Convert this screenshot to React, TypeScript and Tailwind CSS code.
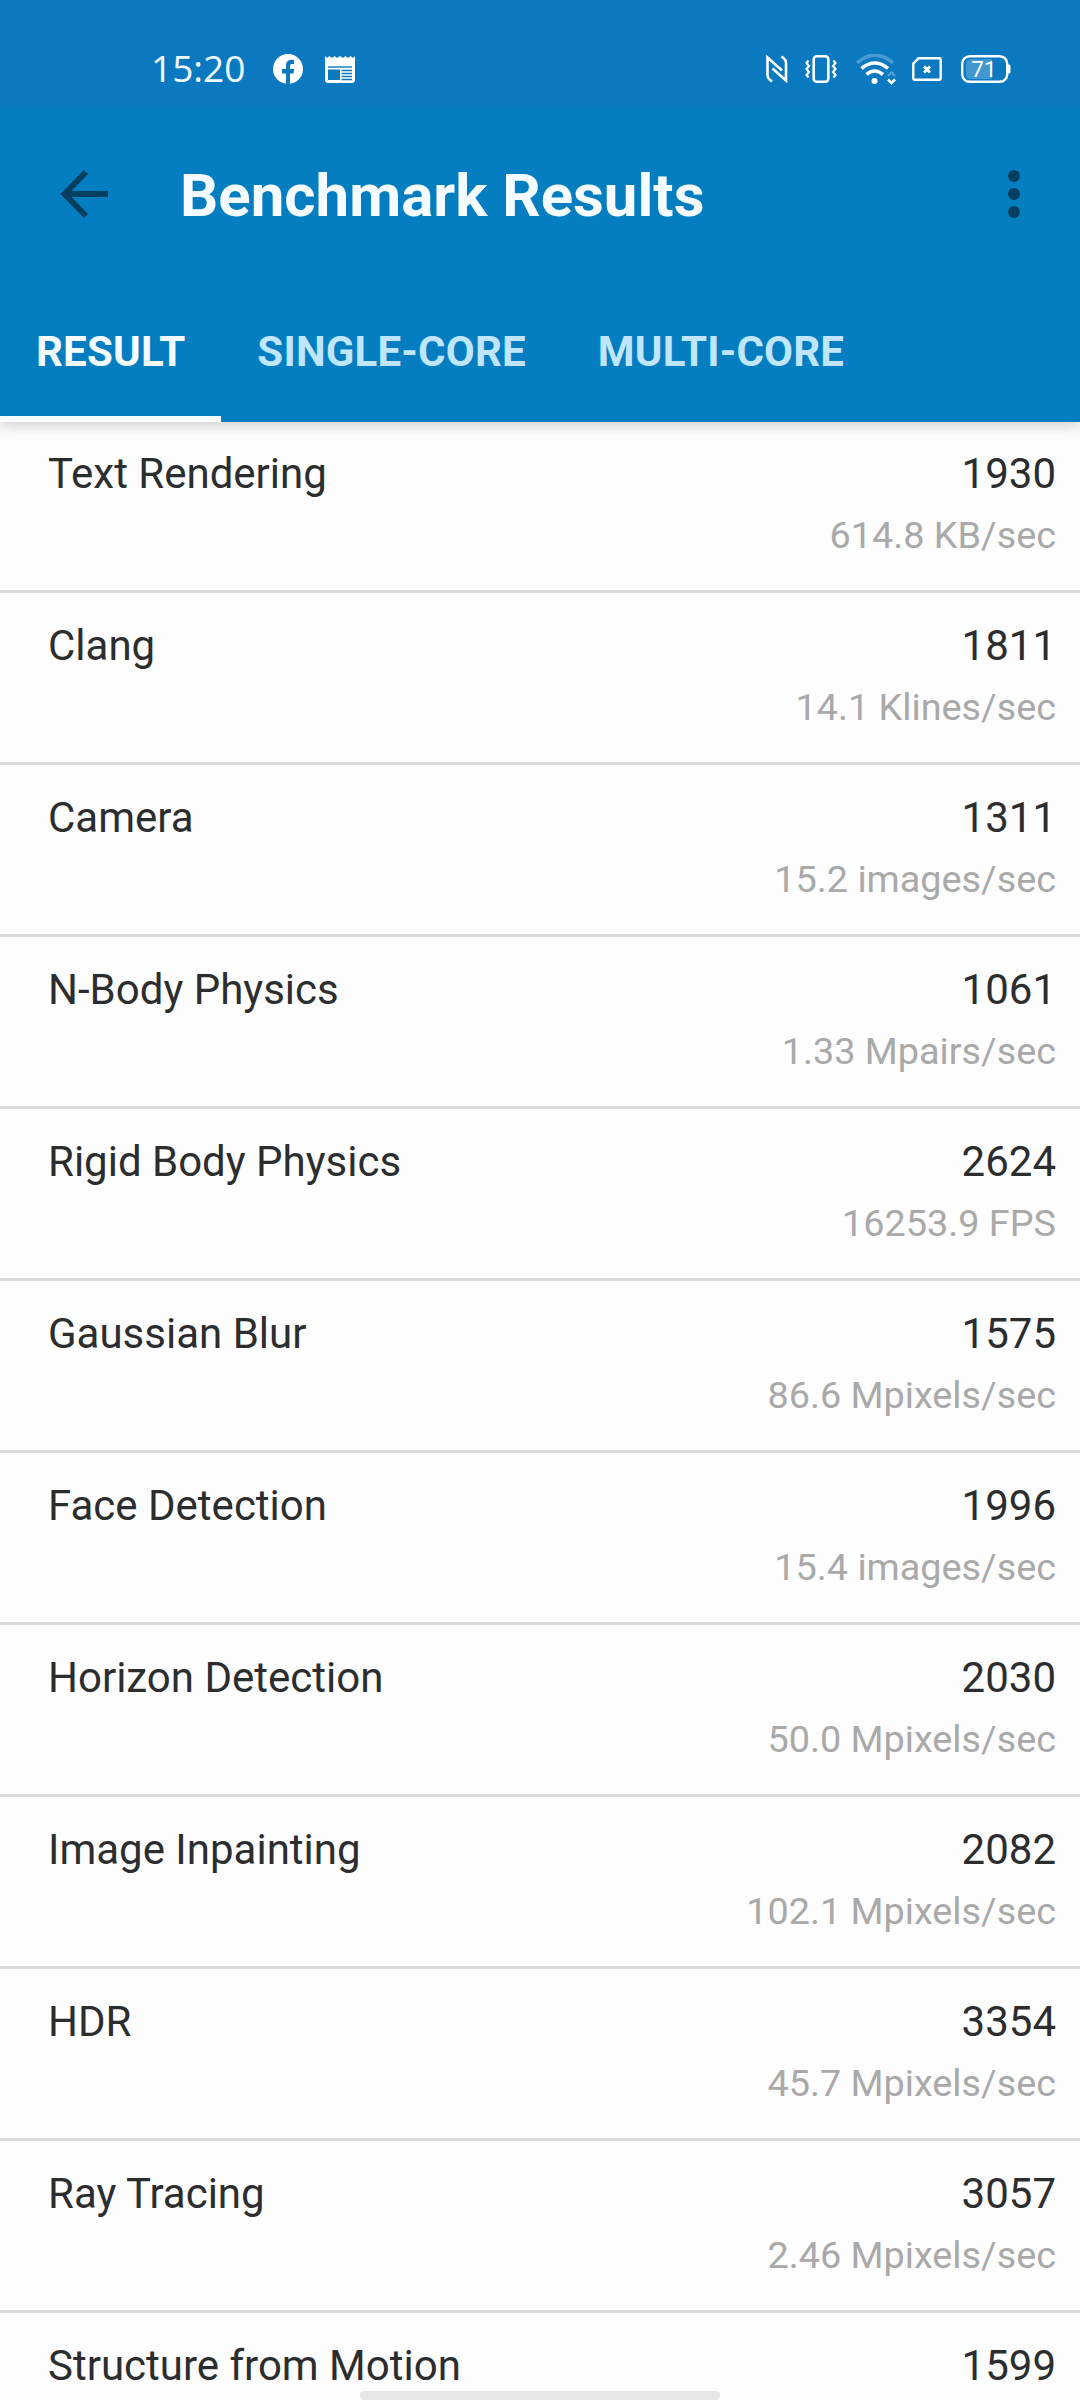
import clsx from 'clsx';

interface BenchmarkResult {
  name: string;
  score: number;
  rate: string;
}

const TABS = ['RESULT', 'SINGLE-CORE', 'MULTI-CORE'];

const RESULTS: BenchmarkResult[] = [
  { name: 'Text Rendering', score: 1930, rate: '614.8 KB/sec' },
  { name: 'Clang', score: 1811, rate: '14.1 Klines/sec' },
  { name: 'Camera', score: 1311, rate: '15.2 images/sec' },
  { name: 'N-Body Physics', score: 1061, rate: '1.33 Mpairs/sec' },
  { name: 'Rigid Body Physics', score: 2624, rate: '16253.9 FPS' },
  { name: 'Gaussian Blur', score: 1575, rate: '86.6 Mpixels/sec' },
  { name: 'Face Detection', score: 1996, rate: '15.4 images/sec' },
  { name: 'Horizon Detection', score: 2030, rate: '50.0 Mpixels/sec' },
  { name: 'Image Inpainting', score: 2082, rate: '102.1 Mpixels/sec' },
  { name: 'HDR', score: 3354, rate: '45.7 Mpixels/sec' },
  { name: 'Ray Tracing', score: 3057, rate: '2.46 Mpixels/sec' },
  { name: 'Structure from Motion', score: 1599, rate: '' },
];

function FacebookIcon() {
  return (
    <svg width="30" height="30" viewBox="0 0 30 30">
      <circle cx="15" cy="15" r="15" fill="#fff" />
      <path
        d="M13 30V19.5H9v-4.6h4v-3.2C13 7.900 15.300 5.800 18.700 5.800c1.100 0 2.300.2 2.300.2v4h-1.800c-1.700 0-2.200 1-2.200 2.100v2.800h4.200l-.7 4.600H17V30z"
        fill="#0b79c0"
      />
    </svg>
  );
}

function NewsIcon() {
  return (
    <svg width="30" height="27" viewBox="0 0 30 27" fill="none">
      <path
        d="M0 0l2 2 2.500-2L7 2l2.500-2L12 2l3-2 3 2 2.500-2L23 2l2.500-2L28 2l2-2v24a3 3 0 0 1-3 3H3a3 3 0 0 1-3-3z"
        fill="#fff"
      />
      <path d="M3 11h24" stroke="#0b79c0" strokeWidth="1.400" />
      <path d="M3 13.500h12v10.500H3z" fill="#0b79c0" />
      <path d="M16.500 14.500H27M16.500 17.500H27M16.500 20.500H27M16.500 23.500H27" stroke="#0b79c0" strokeWidth="1.700" />
    </svg>
  );
}

function NfcIcon() {
  return (
    <svg width="22" height="28" viewBox="0 0 22 28" fill="none" stroke="#fff" strokeWidth="2.600">
      <path d="M6 26.500L3.500 24.500Q1.500 23 1.500 20V2.500L16 15.500" />
      <path d="M15.500 1.500L18 3.500Q20 5 20 8V25.500L6.500 13.500" />
    </svg>
  );
}

function VibrateIcon() {
  return (
    <svg width="32" height="28" viewBox="0 0 32 28" fill="none" stroke="#fff" strokeWidth="2.600">
      <rect x="8.700" y="1.300" width="14.600" height="25.400" rx="3" />
      <path d="M3.500 5.500L1.500 8l2.500 3-2.500 3L4 17l-2.500 3 2 2.500" strokeWidth="2.200" />
      <path d="M28.500 5.500l2 2.500L28 11l2.500 3-2.500 3 2.500 3-2 2.500" strokeWidth="2.200" />
    </svg>
  );
}

function WifiIcon() {
  return (
    <svg width="40" height="32" viewBox="0 0 40 32" fill="none" stroke="#fff">
      <path d="M1 9Q19-6.500 37 9" strokeWidth="3.600" opacity="0.250" />
      <path d="M5.500 14.500Q19 3.500 32 14.500" strokeWidth="3.600" />
      <path d="M10.500 20.500Q18.500 13.500 27 20.500" strokeWidth="3.600" />
      <circle cx="18.500" cy="27" r="3" fill="#fff" stroke="none" />
      <path d="M32 22l3.500-3.500L39 22" strokeWidth="2.400" opacity="0.300" />
      <path d="M32 25.500l3.500 3.500 3.500-3.500" strokeWidth="2.600" />
    </svg>
  );
}

function SimIcon() {
  return (
    <svg width="30" height="24" viewBox="0 0 30 24" fill="none" stroke="#fff" strokeWidth="2.400">
      <path d="M6.500 1.300H27.500Q28.700 1.300 28.700 2.500V21.500Q28.700 22.700 27.500 22.700H2.500Q1.300 22.700 1.300 21.500V6.500z" />
      <path d="M12 9.500l6 6M18 9.500l-6 6" strokeWidth="2.800" />
    </svg>
  );
}

function BatteryIcon() {
  return (
    <svg width="50" height="28" viewBox="0 0 50 28" fill="none" className="overflow-visible">
      <path d="M5 9Q5 4 10 4H31V24H10Q5 24 5 19z" fill="#fff" opacity="0.220" />
      <rect x="1.200" y="1.200" width="45" height="25.600" rx="7.500" stroke="#fff" strokeWidth="2.400" />
      <path d="M47 9.500h1q1.500 0 1.500 1.500v6q0 1.500-1.500 1.500h-1z" fill="#fff" />
      <text x="23" y="22" textAnchor="middle" fill="#fff" fontSize="22.500" className="font-['Roboto',sans-serif]">
        71
      </text>
    </svg>
  );
}

function StatusBar() {
  return (
    <div className="relative z-20 flex h-[108px] items-start justify-between bg-[#0b79c0] pt-[54px]">
      <div className="flex items-start">
        <span className="ml-[151px] mt-[-4px] w-[122px] font-['Open_Sans',sans-serif] text-[37px] leading-[36px] text-[#f0fbff]">
          15:20
        </span>
        <FacebookIcon />
        <div className="ml-[22px] mt-[2px]">
          <NewsIcon />
        </div>
      </div>
      <div className="mr-[69px] flex items-start">
        <div className="mr-[17px] mt-px">
          <NfcIcon />
        </div>
        <div className="mr-[19px] mt-px">
          <VibrateIcon />
        </div>
        <WifiIcon />
        <div className="ml-[16px] mt-[3px]">
          <SimIcon />
        </div>
        <div className="ml-[19px] mt-px">
          <BatteryIcon />
        </div>
      </div>
    </div>
  );
}

function AppBar() {
  return (
    <header className="relative z-10 h-[314px] bg-[#047ec0] shadow-[0_3px_14px_rgba(0,0,0,0.2)]">
      <div className="flex h-[172px] items-center px-[60px]">
        <svg width="48" height="50" viewBox="0 0 48 50" fill="none" stroke="#053f60" strokeWidth="6">
          <path d="M48 25H5M26 3L4.500 25 26 47" />
        </svg>
        <h1 className="ml-[72px] flex-1 pt-[4px] text-[60px] font-bold leading-[72px] text-[#f4fcff]">
          Benchmark Results
        </h1>
        <svg width="12" height="50" viewBox="0 0 12 50" fill="#053f60">
          <circle cx="6" cy="7" r="6" />
          <circle cx="6" cy="25" r="6" />
          <circle cx="6" cy="43" r="6" />
        </svg>
      </div>
      <nav className="flex h-[142px]">
        {TABS.map((tab, i) => (
          <button
            key={tab}
            className={clsx(
              'flex items-center border-b-[6px] px-[36px] pt-[8px] text-[42px] font-bold leading-[48px] tracking-[0.2px]',
              i === 0 ? 'border-[#f7fdff] text-[#f4fcff]' : 'border-transparent text-[#c0e6fd]',
            )}
          >
            {tab}
          </button>
        ))}
      </nav>
    </header>
  );
}

function ResultRow({ result }: { result: BenchmarkResult }) {
  return (
    <li className="flex h-[172px] shrink-0 justify-between border-b-[3px] border-[#dadada] pl-[48px] pr-[24px] pt-[28px]">
      <span className="text-[42px] leading-[49px] text-[#2c2d2f]">{result.name}</span>
      <div className="text-right">
        <p className="text-[42px] leading-[49px] text-[#2c2d2f]">{result.score}</p>
        <p className="mt-[16px] text-[37.8px] leading-[42px] text-[#a9a9a9]">{result.rate}</p>
      </div>
    </li>
  );
}

export default function App() {
  return (
    <div className="relative flex h-[2400px] w-[1080px] flex-col overflow-hidden bg-[#fdfdfd] font-['Roboto',sans-serif]">
      <StatusBar />
      <AppBar />
      <ul className="-mt-px flex flex-1 flex-col overflow-hidden">
        {RESULTS.map((result) => (
          <ResultRow key={result.name} result={result} />
        ))}
      </ul>
      {/* Gesture navigation handle */}
      <div className="absolute bottom-0 left-[360px] h-[9px] w-[360px] rounded-full bg-[#e7e7e7]" />
    </div>
  );
}
